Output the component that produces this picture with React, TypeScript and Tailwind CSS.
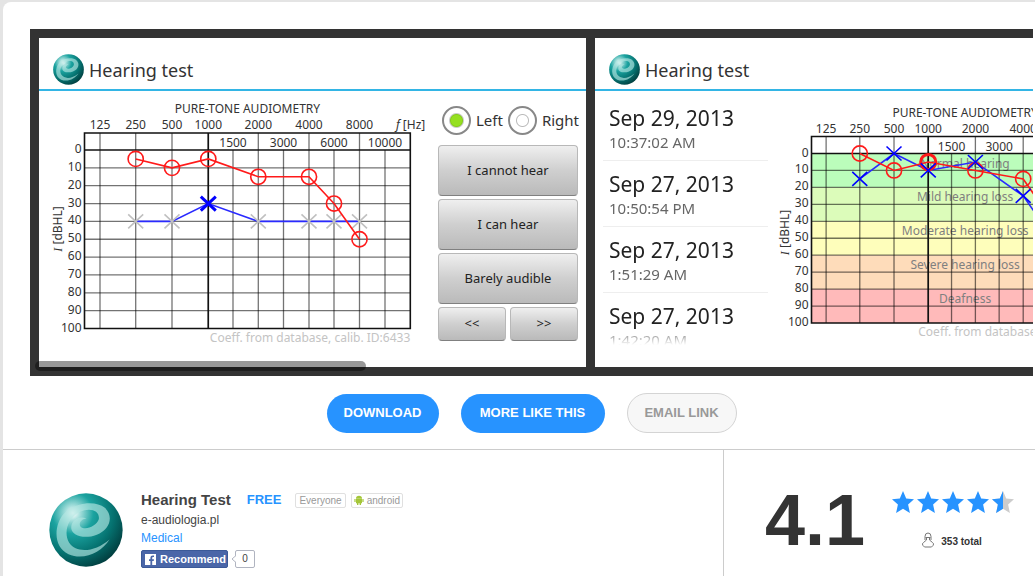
import { useId, useState } from "react";

interface Point {
  freq: number;
  level: number;
  style?: "bold" | "muted";
}

interface IAudiogram {
  left: number;
  top: number;
  scaleX: number;
  stepY: number;
  width: number;
  circles: Point[];
  crosses: Point[];
  crossesOnTop?: boolean;
  zones?: boolean;
}

// horizontal position of every frequency column at full scale
const COLUMNS: Record<number, number> = {
  125: 15.5,
  250: 51.2,
  500: 87.5,
  1000: 123.8,
  1500: 148.5,
  2000: 173.8,
  3000: 199,
  4000: 224.5,
  6000: 249.5,
  8000: 275,
  10000: 300.5,
};
const CHART_WIDTH = 325.8;
const UPPER = [125, 250, 500, 1000, 2000, 4000, 8000];
const INNER = [1500, 3000, 6000, 10000];
const LEVELS = [0, 10, 20, 30, 40, 50, 60, 70, 80, 90, 100];

const ZONES = [
  { label: "Normal hearing", color: "#bbfdbb" },
  { label: "Mild hearing loss", color: "#dcfcba" },
  { label: "Moderate hearing loss", color: "#fefebb" },
  { label: "Severe hearing loss", color: "#fedcba" },
  { label: "Deafness", color: "#ffbaba" },
];

function Audiogram({
  left,
  top,
  scaleX,
  stepY,
  width,
  circles,
  crosses,
  crossesOnTop,
  zones,
}: IAudiogram) {
  const x = (freq: number) => left + COLUMNS[freq] * scaleX;
  const y = (level: number) => top + (level / 10) * stepY;
  const right = left + CHART_WIDTH * scaleX;
  const middle = (left + right) / 2;
  const head = top - 17;
  const line = (points: Point[]) =>
    points.map((p) => `${x(p.freq)},${y(p.level)}`).join(" ");

  const crossMarks = crosses.map((p) => (
    <path
      key={p.freq}
      d={`M${x(p.freq) - 7.5} ${y(p.level) - 7}l15 14m0 -14l-15 14`}
      stroke={p.style === "muted" ? "#c0c0c0" : "#0000ff"}
      strokeWidth={p.style === "bold" ? 3 : 1.6}
    />
  ));

  return (
    <svg
      width={width}
      height={264}
      fill="none"
      fontSize="12"
      className="shrink-0 font-['Noto_Sans',sans-serif]"
    >
      {zones &&
        ZONES.map((zone, i) => (
          <rect
            key={zone.label}
            x={left}
            y={y(i * 20)}
            width={right - left}
            height={stepY * 2}
            fill={zone.color}
          />
        ))}
      {zones &&
        ZONES.map((zone, i) => (
          <text
            key={zone.label}
            x={middle}
            y={y(i * 20) + 14}
            textAnchor="middle"
            fill="#808080"
          >
            {zone.label}
          </text>
        ))}

      <g stroke="#000" strokeOpacity="0.55" strokeWidth="1.3">
        {LEVELS.slice(1, -1).map((level) => (
          <path key={level} d={`M${left} ${y(level)}H${right}`} />
        ))}
        {UPPER.map((freq) => (
          <path key={freq} d={`M${x(freq)} ${head}V${y(100)}`} />
        ))}
        {INNER.map((freq) => (
          <path key={freq} d={`M${x(freq)} ${top}V${y(100)}`} />
        ))}
      </g>
      <g stroke="#111" strokeWidth="1.6">
        <path d={`M${left} ${head}H${right}V${y(100)}H${left}Z`} />
        <path d={`M${left} ${top}H${right}`} />
        <path d={`M${x(1000)} ${head}V${y(100)}`} />
      </g>

      <g fill="#333">
        <text x={middle} y={top - 37} textAnchor="middle">
          PURE-TONE AUDIOMETRY
        </text>
        {UPPER.map((freq) => (
          <text key={freq} x={x(freq)} y={top - 21} textAnchor="middle">
            {freq}
          </text>
        ))}
        {INNER.map((freq) => (
          <text key={freq} x={x(freq)} y={top - 3} textAnchor="middle">
            {freq}
          </text>
        ))}
        {LEVELS.map((level) => (
          <text key={level} x={left - 3} y={y(level) + 3} textAnchor="end">
            {level}
          </text>
        ))}
        <text x={right + 15} y={top - 21} textAnchor="end">
          <tspan fontStyle="italic">f</tspan> [Hz]
        </text>
        <text
          transform={`translate(${left - 23} ${top + 79}) rotate(-90)`}
          textAnchor="middle"
        >
          <tspan fontStyle="italic" className="font-['Liberation_Serif',serif]">
            I
          </tspan>{" "}
          [dBHL]
        </text>
      </g>
      <text x={right} y={y(100) + 13} textAnchor="end" fill="#c4c4c4">
        Coeff. from database, calib. ID:6433
      </text>

      <polyline points={line(crosses)} stroke="#2a2aff" strokeWidth="1.6" />
      {!crossesOnTop && crossMarks}
      <polyline points={line(circles)} stroke="#ff1a1a" strokeWidth="1.6" />
      {circles.map((p) => (
        <circle
          key={p.freq}
          cx={x(p.freq)}
          cy={y(p.level)}
          r="7.6"
          stroke="#ff1a1a"
          strokeWidth={p.style === "bold" ? 3 : 1.6}
        />
      ))}
      {crossesOnTop && crossMarks}
    </svg>
  );
}

function Logo({ className }: { className: string }) {
  const id = useId();

  return (
    <svg viewBox="0 0 220 220" className={className} aria-hidden="true">
      <defs>
        <radialGradient id={`${id}ball`} cx="0.32" cy="0.27" r="0.8">
          <stop offset="0" stopColor="#ffffff" />
          <stop offset="0.12" stopColor="#a8e0dd" />
          <stop offset="0.35" stopColor="#1ba3a0" />
          <stop offset="0.7" stopColor="#05716f" />
          <stop offset="1" stopColor="#013c3d" />
        </radialGradient>
      </defs>
      <circle cx="110" cy="110" r="109" fill={`url(#${id}ball)`} />
      <path
        d="M180 138C156 176 104 202 58 182C12 160 14 96 44 62C74 28 138 20 166 44C194 70 180 110 142 124C106 138 68 128 66 104C66 82 88 66 112 76C98 76 86 90 94 100C108 112 142 98 148 78C152 52 122 42 92 56C56 74 42 118 60 148C82 180 136 176 180 138Z"
        fill="#b4e6e2"
        fillOpacity="0.65"
      />
    </svg>
  );
}

function AppHeader() {
  return (
    <div className="flex h-[53px] items-end gap-[5px] border-b-2 border-[#33b5e5] pb-1 pl-[14px]">
      <Logo className="size-[31px]" />
      <h2 className="text-[18px] leading-[30px] text-[#333]">Hearing test</h2>
    </div>
  );
}

const KEY =
  "rounded border border-[#b8b8b8] border-b-[#808080] bg-linear-to-b from-[#efefef] via-[#cfcfcf] to-[#bababa] text-[13px] text-[#222]";

function TestScreen() {
  const [ear, setEar] = useState("Left");

  return (
    <section className="h-[329px] w-[547px] shrink-0 bg-white font-['Noto_Sans',sans-serif]">
      <AppHeader />
      <div className="flex">
        <Audiogram
          left={45.5}
          top={59}
          scaleX={1}
          stepY={17.85}
          width={399}
          circles={[
            { freq: 250, level: 5 },
            { freq: 500, level: 10 },
            { freq: 1000, level: 5 },
            { freq: 2000, level: 15 },
            { freq: 4000, level: 15 },
            { freq: 6000, level: 30 },
            { freq: 8000, level: 50 },
          ]}
          crosses={[
            { freq: 250, level: 40, style: "muted" },
            { freq: 500, level: 40, style: "muted" },
            { freq: 1000, level: 30, style: "bold" },
            { freq: 2000, level: 40, style: "muted" },
            { freq: 4000, level: 40, style: "muted" },
            { freq: 6000, level: 40, style: "muted" },
            { freq: 8000, level: 40, style: "muted" },
          ]}
        />
        <div className="flex flex-col gap-[3px] pt-[14px]">
          <div className="mb-[7px] flex gap-[5px] pl-1">
            {["Left", "Right"].map((side) => (
              <label
                key={side}
                className="flex items-center gap-[5px] text-[15px] leading-[30px] text-[#333]"
              >
                <input
                  type="radio"
                  name="ear"
                  checked={ear === side}
                  onChange={() => setEar(side)}
                  className="size-[29px] appearance-none rounded-full border-2 border-[#888] bg-[radial-gradient(circle,#fff_5px,#bbb_6px,#fff_7px)] checked:bg-[radial-gradient(circle,#95e020_5px,#86cc1c_6px,#ccc_7px,#fff_8px)]"
                />
                {side}
              </label>
            ))}
          </div>
          <button className={`${KEY} h-[51px] w-[140px]`}>I cannot hear</button>
          <button className={`${KEY} h-[51px] w-[140px]`}>I can hear</button>
          <button className={`${KEY} h-[51px] w-[140px]`}>
            Barely audible
          </button>
          <div className="flex gap-1">
            <button className={`${KEY} h-[34px] w-[68px]`}>&lt;&lt;</button>
            <button className={`${KEY} h-[34px] w-[68px]`}>&gt;&gt;</button>
          </div>
        </div>
      </div>
    </section>
  );
}

const RESULTS = [
  { date: "Sep 29, 2013", time: "10:37:02 AM" },
  { date: "Sep 27, 2013", time: "10:50:54 PM" },
  { date: "Sep 27, 2013", time: "1:51:29 AM" },
  { date: "Sep 27, 2013", time: "1:42:20 AM" },
];

function HistoryScreen() {
  return (
    <section className="h-[329px] w-[547px] shrink-0 bg-white font-['Noto_Sans',sans-serif]">
      <AppHeader />
      <div className="flex">
        <ul className="h-[254px] w-[175px] shrink-0 overflow-hidden mask-b-from-[238px] mask-b-to-[254px] pt-1 pr-[2px] pl-2">
          {RESULTS.map((result) => (
            <li
              key={result.time}
              className="flex h-[66px] flex-col justify-center border-b border-[#eee] pl-[6px]"
            >
              <span className="text-[21px] leading-[28px] text-[#222]">
                {result.date}
              </span>
              <span className="text-[15px] leading-[20px] text-[#666]">
                {result.time}
              </span>
            </li>
          ))}
        </ul>
        <Audiogram
          left={41.5}
          top={62.5}
          scaleX={0.943}
          stepY={16.95}
          width={372}
          zones
          crossesOnTop
          circles={[
            { freq: 250, level: 0 },
            { freq: 500, level: 10 },
            { freq: 1000, level: 5, style: "bold" },
            { freq: 2000, level: 10 },
            { freq: 4000, level: 15 },
            { freq: 6000, level: 35 },
          ]}
          crosses={[
            { freq: 250, level: 15 },
            { freq: 500, level: 0 },
            { freq: 1000, level: 10 },
            { freq: 2000, level: 5 },
            { freq: 4000, level: 25 },
            { freq: 6000, level: 45 },
          ]}
        />
      </div>
    </section>
  );
}

function Star({ half }: { half?: boolean }) {
  const shape =
    "M11 0L14.2 7.6L22 8.3L16.1 13.6L17.9 22L11 17.8L4.1 22L5.9 13.6L0 8.3L7.8 7.6Z";

  return (
    <svg viewBox="0 0 22 22" className="size-[22px]">
      <path d={shape} fill={half ? "#ccc" : "#2793ff"} />
      {half && (
        <path
          d="M11 0L11 17.8L4.1 22L5.9 13.6L0 8.3L7.8 7.6Z"
          fill="#2793ff"
        />
      )}
    </svg>
  );
}

function AppInfo() {
  return (
    <div className="flex flex-1 items-center gap-[18px] self-start pt-[41px] pl-[46px]">
      <Logo className="size-[74px]" />
      <div className="text-[12px] leading-[18px] text-[#444]">
        <div className="flex items-center">
          <h1 className="text-[15px] font-bold">Hearing Test</h1>
          <span className="ml-4 text-[13px] font-bold text-[#2793ff]">
            FREE
          </span>
          <span className="ml-[14px] rounded-xs border border-[#e0e0e0] px-[3px] text-[10px] leading-[13px] text-[#999]">
            Everyone
          </span>
          <span className="ml-[5px] flex items-center gap-[3px] rounded-xs border border-[#e0e0e0] px-[2px] text-[10px] leading-[13px] text-[#999]">
            <svg viewBox="0 0 10 10" className="size-[10px]" fill="#a4c639">
              <path d="M2 3.4a3 2.6 0 0 1 6 0zM2 3.8h6v4.4H2zM.4 4h1.2v3H.4zM8.4 4h1.2v3H8.4zM3 8h1.4v2H3zM5.6 8H7v2H5.6z" />
            </svg>
            android
          </span>
        </div>
        <p className="mt-[2px]">e-audiologia.pl</p>
        <a href="#medical" className="block text-[#2793ff]">
          Medical
        </a>
        <div className="mt-[3px] flex items-center">
          <button className="flex h-[18px] w-[87px] items-center gap-1 rounded-xs border border-[#3b5998] bg-[#4a66a8] pl-[3px] text-[11px] font-bold text-white">
            <svg viewBox="0 0 11 11" className="size-[11px]">
              <rect width="11" height="11" fill="#fff" />
              <path
                d="M5.4 11V7H4V5.3h1.4V4c0-1.7 1-2.5 2.4-2.5H9v1.6H8c-.6 0-.8.3-.8.9v1.3H9L8.7 7H7.2v4z"
                fill="#4a66a8"
              />
            </svg>
            Recommend
          </button>
          <svg
            viewBox="0 0 5 8"
            className="z-10 -mr-px ml-[3px] h-2 w-[5px]"
            fill="#fff"
            stroke="#b0b4c0"
          >
            <path d="M5 .5L1 4L5 7.5" />
          </svg>
          <span className="h-[18px] w-5 rounded-xs border border-[#b0b4c0] text-center text-[10px] leading-[16px]">
            0
          </span>
        </div>
      </div>
    </div>
  );
}

function Rating() {
  return (
    <aside className="flex w-[312px] gap-[27px] border-l border-[#ccc] pt-[32px] pl-[41px]">
      <strong className="text-[72px] leading-[76px] text-[#333]">4.1</strong>
      <div className="pt-[9px]">
        <div className="flex gap-[3px]">
          <Star />
          <Star />
          <Star />
          <Star />
          <Star half />
        </div>
        <div className="mt-[17px] flex items-center justify-center gap-[7px] pr-[2px] text-[10px] leading-[16px] font-bold text-[#333]">
          <svg
            viewBox="0 0 12 16"
            className="h-4 w-3"
            fill="none"
            stroke="#777"
          >
            <path d="M3 8V4.5a3 3.5 0 0 1 6 0V8M3.5 5.5h5M4.500 6v2l-3 2.5a2 2 0 0 0-.5 3L2.5 15h7l1.500-1.500a2 2 0 0 0-.5-3L7.5 8V6" />
          </svg>
          <span className="pt-1">353 total</span>
        </div>
      </div>
    </aside>
  );
}

function App() {
  return (
    <div className="flex min-h-screen flex-col bg-[#e4e4e4] pt-[2px] pl-[3px] font-['Liberation_Sans',Arial,sans-serif]">
      <main className="flex flex-1 flex-col rounded-tl-lg bg-white pt-[27px]">
        <div className="relative mr-[2px] ml-[27px]">
          <div className="flex gap-[9px] overflow-hidden bg-[#333] p-[9px] pr-0">
            <TestScreen />
            <HistoryScreen />
          </div>
          <div className="absolute bottom-[5px] left-[5px] h-[10px] w-[331px] rounded-full bg-black/40" />
        </div>

        <div className="mr-[2px] ml-[27px] flex items-center justify-center gap-[22px] pt-[17px] pb-4 text-[13px] font-bold">
          <button className="h-[39px] w-[112px] rounded-full bg-[#2793ff] text-white">
            DOWNLOAD
          </button>
          <button className="h-[39px] w-[144px] rounded-full bg-[#2793ff] text-white">
            MORE LIKE THIS
          </button>
          <button className="h-[40px] w-[110px] rounded-full border border-[#d4d4d4] bg-[#f7f7f7] text-[#999]">
            EMAIL LINK
          </button>
        </div>

        <div className="flex flex-1 border-t border-[#ccc]">
          <AppInfo />
          <Rating />
        </div>
      </main>
    </div>
  );
}

export default App;
